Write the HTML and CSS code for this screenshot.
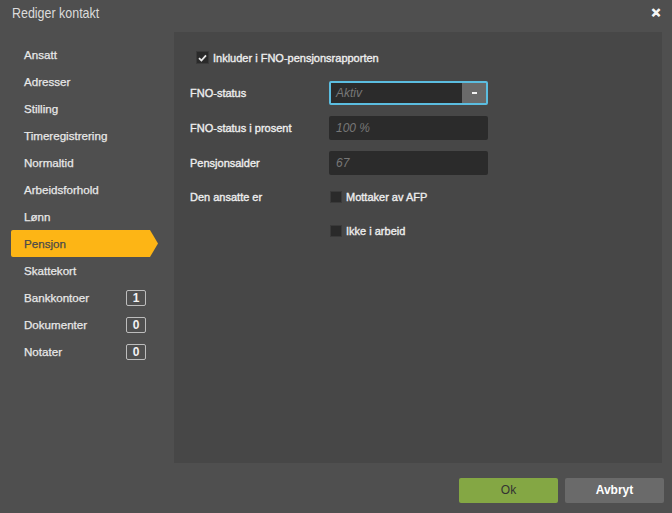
FILE: index.html
```html
<!DOCTYPE html>
<html lang="nb">
<head>
    <meta charset="UTF-8">
    <meta name="viewport" content="width=device-width, initial-scale=1.0">
    <title>Rediger kontakt</title>
    <link rel="stylesheet" href="styles.css">
</head>
<body>
    <div class="dialog">
        <div class="dialog-header">
            <span class="dialog-title">Rediger kontakt</span>
            <span class="close">&#x2715;</span>
        </div>
        <div class="dialog-body">
            <ul class="side-menu">
                <li>Ansatt</li>
                <li>Adresser</li>
                <li>Stilling</li>
                <li>Timeregistrering</li>
                <li>Normaltid</li>
                <li>Arbeidsforhold</li>
                <li>Lønn</li>
                <li class="active">Pensjon</li>
                <li>Skattekort</li>
                <li>Bankkontoer <span class="badge">1</span></li>
                <li>Dokumenter <span class="badge">0</span></li>
                <li>Notater <span class="badge">0</span></li>
            </ul>
            <div class="panel">
                <label class="check top-check">
                    <span class="box checked">
                        <svg width="9" height="8" viewBox="0 0 9 8"><path d="M1 4.2 L3.4 6.5 L8 1.3" fill="none" stroke="#e8e8e8" stroke-width="1.8"/></svg>
                    </span>
                    Inkluder i FNO-pensjonsrapporten
                </label>
                <div class="form-grid">
                    <div class="label">FNO-status</div>
                    <div class="select">
                        <span class="value">Aktiv</span>
                        <span class="select-btn"><span class="caret"></span></span>
                    </div>
                    <div class="label">FNO-status i prosent</div>
                    <div class="input">100 %</div>
                    <div class="label">Pensjonsalder</div>
                    <div class="input">67</div>
                </div>
                <div class="check-grid">
                    <div class="label">Den ansatte er</div>
                    <label class="check"><span class="box"></span>Mottaker av AFP</label>
                    <div></div>
                    <label class="check"><span class="box"></span>Ikke i arbeid</label>
                </div>
            </div>
        </div>
        <div class="dialog-footer">
            <button class="btn btn-ok">Ok</button>
            <button class="btn btn-cancel">Avbryt</button>
        </div>
    </div>
</body>
</html>
```

FILE: styles.css
```css
html, body {
    margin: 0;
    padding: 0;
}
body {
    font-family: "Liberation Sans", Arial, sans-serif;
    font-size: 12px;
    background-color: #4f4f4f;
    color: #e6e6e6;
}
.dialog {
    width: 672px;
    height: 513px;
    display: flex;
    flex-direction: column;
    background-color: #4f4f4f;
}
.dialog-header {
    height: 32px;
    display: flex;
    align-items: center;
    justify-content: space-between;
    padding: 0 11px 7px 12px;
    box-sizing: border-box;
}
.dialog-title {
    display: inline-block;
    font-size: 15px;
    color: #dcdcdc;
    transform: scaleX(0.83);
    transform-origin: left center;
}
.close {
    font-size: 12px;
    font-weight: bold;
    color: #f4f4f4;
    -webkit-text-stroke: 0.6px #f4f4f4;
}
.dialog-body {
    display: flex;
    height: 431px;
}
.side-menu {
    list-style: none;
    margin: 0;
    padding: 9px 0 0 11px;
    width: 174px;
    flex-shrink: 0;
    box-sizing: border-box;
    font-size: 11.6px;
    -webkit-text-stroke: 0.25px currentColor;
}
.side-menu li {
    width: 147px;
    height: 27px;
    line-height: 27px;
    padding-left: 13px;
    padding-right: 12px;
    box-sizing: border-box;
    display: flex;
    align-items: center;
    justify-content: space-between;
    color: #e8e8e8;
}
.side-menu li.active {
    background-color: #fdb515;
    color: #4a4a4a;
    clip-path: polygon(0 0, calc(100% - 8px) 0, 100% 50%, calc(100% - 8px) 100%, 0 100%);
    border-radius: 2px 0 0 2px;
}
.badge {
    display: inline-block;
    width: 18px;
    height: 14px;
    line-height: 14px;
    border: 1px solid #bdbdbd;
    border-radius: 2px;
    text-align: center;
    font-size: 12px;
    font-weight: bold;
    color: #f2f2f2;
    -webkit-text-stroke: 0;
}
.panel {
    flex: 1;
    margin-right: 10px;
    background-color: #474747;
    padding: 19px 0 0 16px;
    font-size: 11px;
}
.check {
    display: flex;
    align-items: center;
    gap: 4px;
    color: #eeeeee;
    -webkit-text-stroke: 0.35px currentColor;
}
.box {
    width: 12px;
    height: 12px;
    background-color: #2a2a2a;
    border: 1px solid #3a3a3a;
    box-sizing: border-box;
    display: flex;
    align-items: center;
    justify-content: center;
}
.top-check {
    padding-left: 6px;
    height: 13px;
}
.top-check .box {
    width: 13px;
    height: 13px;
}
.form-grid {
    display: grid;
    grid-template-columns: 139px 159px;
    grid-auto-rows: 24px;
    row-gap: 11px;
    margin-top: 17px;
}
.label {
    display: flex;
    align-items: center;
    color: #eeeeee;
    -webkit-text-stroke: 0.35px currentColor;
}
.input, .select {
    background-color: #2b2b2b;
    border-radius: 2px;
    color: #777777;
    font-size: 12px;
    font-style: italic;
    display: flex;
    align-items: center;
    padding-left: 7px;
    box-sizing: border-box;
}
.select {
    border: 2px solid #5bbde0;
    padding-left: 5px;
    justify-content: space-between;
}
.select-btn {
    width: 24px;
    height: 100%;
    background-color: #6a6a6a;
    display: flex;
    align-items: center;
    justify-content: center;
}
.caret {
    width: 5px;
    height: 2px;
    background-color: #f2f2f2;
}
.check-grid {
    display: grid;
    grid-template-columns: 139px 159px;
    grid-auto-rows: 22px;
    row-gap: 12px;
    margin-top: 11px;
}
.check-grid .check {
    padding-left: 1px;
}
.dialog-footer {
    flex: 1;
    display: flex;
    justify-content: flex-end;
    align-items: center;
    gap: 7px;
    padding-right: 8px;
    padding-top: 4px;
}
.btn {
    width: 99px;
    height: 25px;
    border: none;
    border-radius: 2px;
    font-family: "Liberation Sans", Arial, sans-serif;
    font-size: 12px;
    cursor: pointer;
}
.btn-ok {
    background-color: #84a744;
    color: #333333;
}
.btn-cancel {
    background-color: #6a6a6a;
    color: #ffffff;
    font-weight: bold;
}
```
